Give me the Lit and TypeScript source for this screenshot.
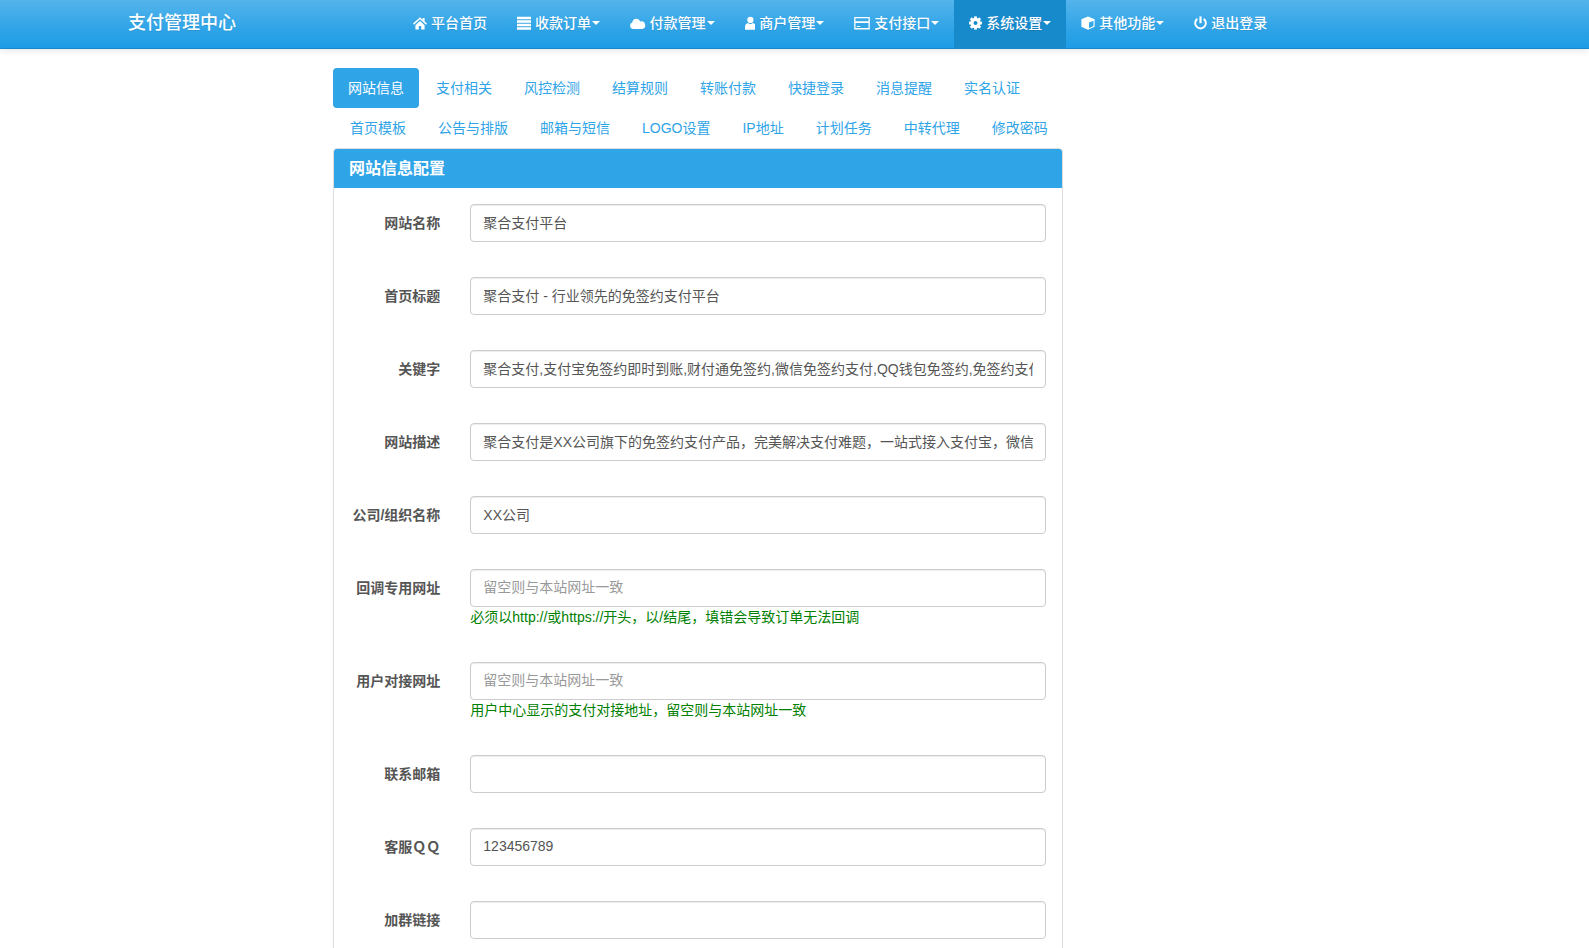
import { LitElement, css, html, svg } from 'lit';
import { customElement } from 'lit/decorators.js';

const icons: Record<string, { w: number; body: unknown }> = {
  home: {
    w: 14,
    body: svg`<path d="M7 1.200 0 7.600l1 1.100L7 3.300l6 5.400 1-1.100-2.400-2.200V2h-2v1.800Z"/><path d="M2.400 9.200V13.400h3.400v-3.400h2.400v3.400h3.400V9.200L7 5Z"/>`,
  },
  list: {
    w: 14,
    body: svg`<path d="M0 .8h14v2.400H0ZM0 4.300h14v2.400H0ZM0 7.800h14v2.400H0ZM0 11.300h14v2.400H0Z"/>`,
  },
  cloud: {
    w: 15.5,
    body: svg`<path d="M12.300 13H3.400A3.300 3.300 0 0 1 2.300 6.600 3.700 3.700 0 0 1 6.100 2.800 4.300 4.300 0 0 1 10.300 5.500 3.800 3.800 0 0 1 12.300 13Z"/>`,
  },
  user: {
    w: 10.8,
    body: svg`<circle cx="5.400" cy="3.900" r="3.100"/><path d="M0 13.800v-3C0 8.600 1.500 7.300 2.900 7c.7.600 1.500 1 2.500 1s1.800-.4 2.500-1c1.400.3 2.900 1.600 2.900 3.800v3Z"/>`,
  },
  card: {
    w: 16,
    body: svg`<path fill-rule="evenodd" d="M.2 1h15.600v12.400H.2ZM1.500 2.300v2.900h13V2.300ZM1.500 6.900v5.200h13V6.900ZM2.800 9.900h3.400v1.100H2.800Z"/>`,
  },
  cog: {
    w: 13,
    body: svg`<circle cx="6.500" cy="7" r="3.600" fill="none" stroke="#fff" stroke-width="3.200"/>${[0, 45, 90, 135, 180, 225, 270, 315].map(
      (a) => svg`<rect x="5.100" y=".4" width="2.800" height="3" transform="rotate(${a} 6.500 7)"/>`,
    )}`,
  },
  cube: {
    w: 14,
    body: svg`<path fill-rule="evenodd" d="M7 .6 13.600 3.200v7.600L7 13.800.4 10.800V3.200ZM8 6.600v5.600l4.500-2.100V4.700Z"/>`,
  },
  off: {
    w: 13,
    body: svg`<path d="M5.400.4h2.200v6.800H5.400Z"/><path fill="none" stroke="#fff" stroke-width="2" d="M3.300 2.900a5.300 5.300 0 1 0 6.400 0"/>`,
  },
};

const icon = (name: string) => {
  const i = icons[name];
  return html`<svg class="ico" width=${i.w} height="14" viewBox="0 0 ${i.w} 14" fill="#fff">${i.body}</svg>`;
};

const menu = [
  { icon: 'home', label: '平台首页' },
  { icon: 'list', label: '收款订单', caret: true },
  { icon: 'cloud', label: '付款管理', caret: true },
  { icon: 'user', label: '商户管理', caret: true },
  { icon: 'card', label: '支付接口', caret: true },
  { icon: 'cog', label: '系统设置', caret: true, active: true },
  { icon: 'cube', label: '其他功能', caret: true },
  { icon: 'off', label: '退出登录' },
];

const tabs = [
  '网站信息', '支付相关', '风控检测', '结算规则', '转账付款', '快捷登录', '消息提醒', '实名认证',
  '首页模板', '公告与排版', '邮箱与短信', 'LOGO设置', 'IP地址', '计划任务', '中转代理', '修改密码',
];

const fields = [
  { label: '网站名称', value: '聚合支付平台' },
  { label: '首页标题', value: '聚合支付 - 行业领先的免签约支付平台' },
  { label: '关键字', value: '聚合支付,支付宝免签约即时到账,财付通免签约,微信免签约支付,QQ钱包免签约,免签约支付' },
  { label: '网站描述', value: '聚合支付是XX公司旗下的免签约支付产品，完美解决支付难题，一站式接入支付宝，微信，财付通，QQ钱包，帮助开发者快速集成到自己相应产品' },
  { label: '公司/组织名称', value: 'XX公司' },
  { label: '回调专用网址', hint: '留空则与本站网址一致', help: '必须以http://或https://开头，以/结尾，填错会导致订单无法回调' },
  { label: '用户对接网址', hint: '留空则与本站网址一致', help: '用户中心显示的支付对接地址，留空则与本站网址一致' },
  { label: '联系邮箱' },
  { label: '客服ＱＱ', value: '123456789' },
  { label: '加群链接' },
];

@customElement('app-root')
export class AppRoot extends LitElement {
  static styles = css`
    :host {
      display: block;
      height: 948px;
      overflow: hidden;
      background: #fff;
      color: #555;
      font-family: 'Liberation Sans', 'Noto Sans CJK SC', sans-serif;
      font-size: 14px;
      line-height: 20px;
    }
    .navbar {
      display: flex;
      height: 49px;
      box-sizing: border-box;
      padding-left: 113px;
      background: linear-gradient(#54b4eb, #2fa4e7 60%, #1d9ce5);
      border-bottom: 1px solid #178acc;
      box-shadow: 0 1px 8px rgba(0, 0, 0, 0.12);
      color: #fff;
      text-shadow: 0 1px 0 rgba(0, 0, 0, 0.1);
    }
    .brand {
      width: 285px;
      box-sizing: border-box;
      padding: 13px 15px;
      font-size: 18px;
      font-weight: 500;
    }
    .menu {
      display: flex;
    }
    .menu a {
      display: flex;
      align-items: center;
      padding: 0 15px 3px;
      font-weight: 500;
      white-space: nowrap;
    }
    .menu a.active {
      background: #178acc;
    }
    .ico {
      flex: none;
      margin-right: 4px;
    }
    .caret {
      width: 0;
      height: 0;
      margin-left: 1px;
      border-top: 4px solid #fff;
      border-left: 4px solid transparent;
      border-right: 4px solid transparent;
    }
    .content {
      width: 730px;
      margin: 19px 0 0 333px;
    }
    .pills {
      display: flex;
      flex-wrap: wrap;
    }
    .pills a {
      padding: 10px 15px;
      border-radius: 4px;
      color: #2fa4e7;
    }
    .pills a + a {
      margin-left: 2px;
    }
    .pills a.active {
      background: #2fa4e7;
      color: #fff;
    }
    .panel {
      border: 1px solid #ddd;
      border-radius: 4px 4px 0 0;
    }
    .heading {
      height: 39px;
      box-sizing: border-box;
      padding: 10px 15px;
      background: #2fa4e7;
      border-radius: 3px 3px 0 0;
      color: #fff;
      font-size: 16px;
      font-weight: bold;
    }
    .body {
      padding: 16px 0 15px;
    }
    .row {
      display: grid;
      grid-template-columns: 16.6667% 1fr;
      margin-bottom: 35px;
    }
    .row label {
      padding: 9px 15px 0 0;
      font-weight: bold;
      text-align: right;
    }
    .field {
      padding: 0 16px 0 15px;
    }
    input {
      display: block;
      width: 100%;
      height: 38px;
      box-sizing: border-box;
      padding: 5px 12px 7px;
      border: 1px solid #ccc;
      border-radius: 4px;
      box-shadow: inset 0 1px 1px rgba(0, 0, 0, 0.075);
      color: #555;
      font: inherit;
    }
    input::placeholder {
      color: #999;
      opacity: 1;
    }
    .help {
      color: #008000;
    }
  `;

  render() {
    return html`
      <nav class="navbar">
        <div class="brand">支付管理中心</div>
        <div class="menu">
          ${menu.map(
            (m) => html`<a class=${m.active ? 'active' : ''}>${icon(m.icon)}${m.label}${m.caret ? html`<span class="caret"></span>` : ''}</a>`,
          )}
        </div>
      </nav>
      <div class="content">
        <div class="pills">
          ${tabs.map((t, i) => html`<a class=${i === 0 ? 'active' : ''}>${t}</a>`)}
        </div>
        <div class="panel">
          <div class="heading">网站信息配置</div>
          <div class="body">
            ${fields.map(
              (f) => html`<div class="row">
                <label>${f.label}</label>
                <div class="field">
                  <input type="text" .value=${f.value ?? ''} placeholder=${f.hint ?? ''} />
                  ${f.help ? html`<div class="help">${f.help}</div>` : ''}
                </div>
              </div>`,
            )}
          </div>
        </div>
      </div>
    `;
  }
}
